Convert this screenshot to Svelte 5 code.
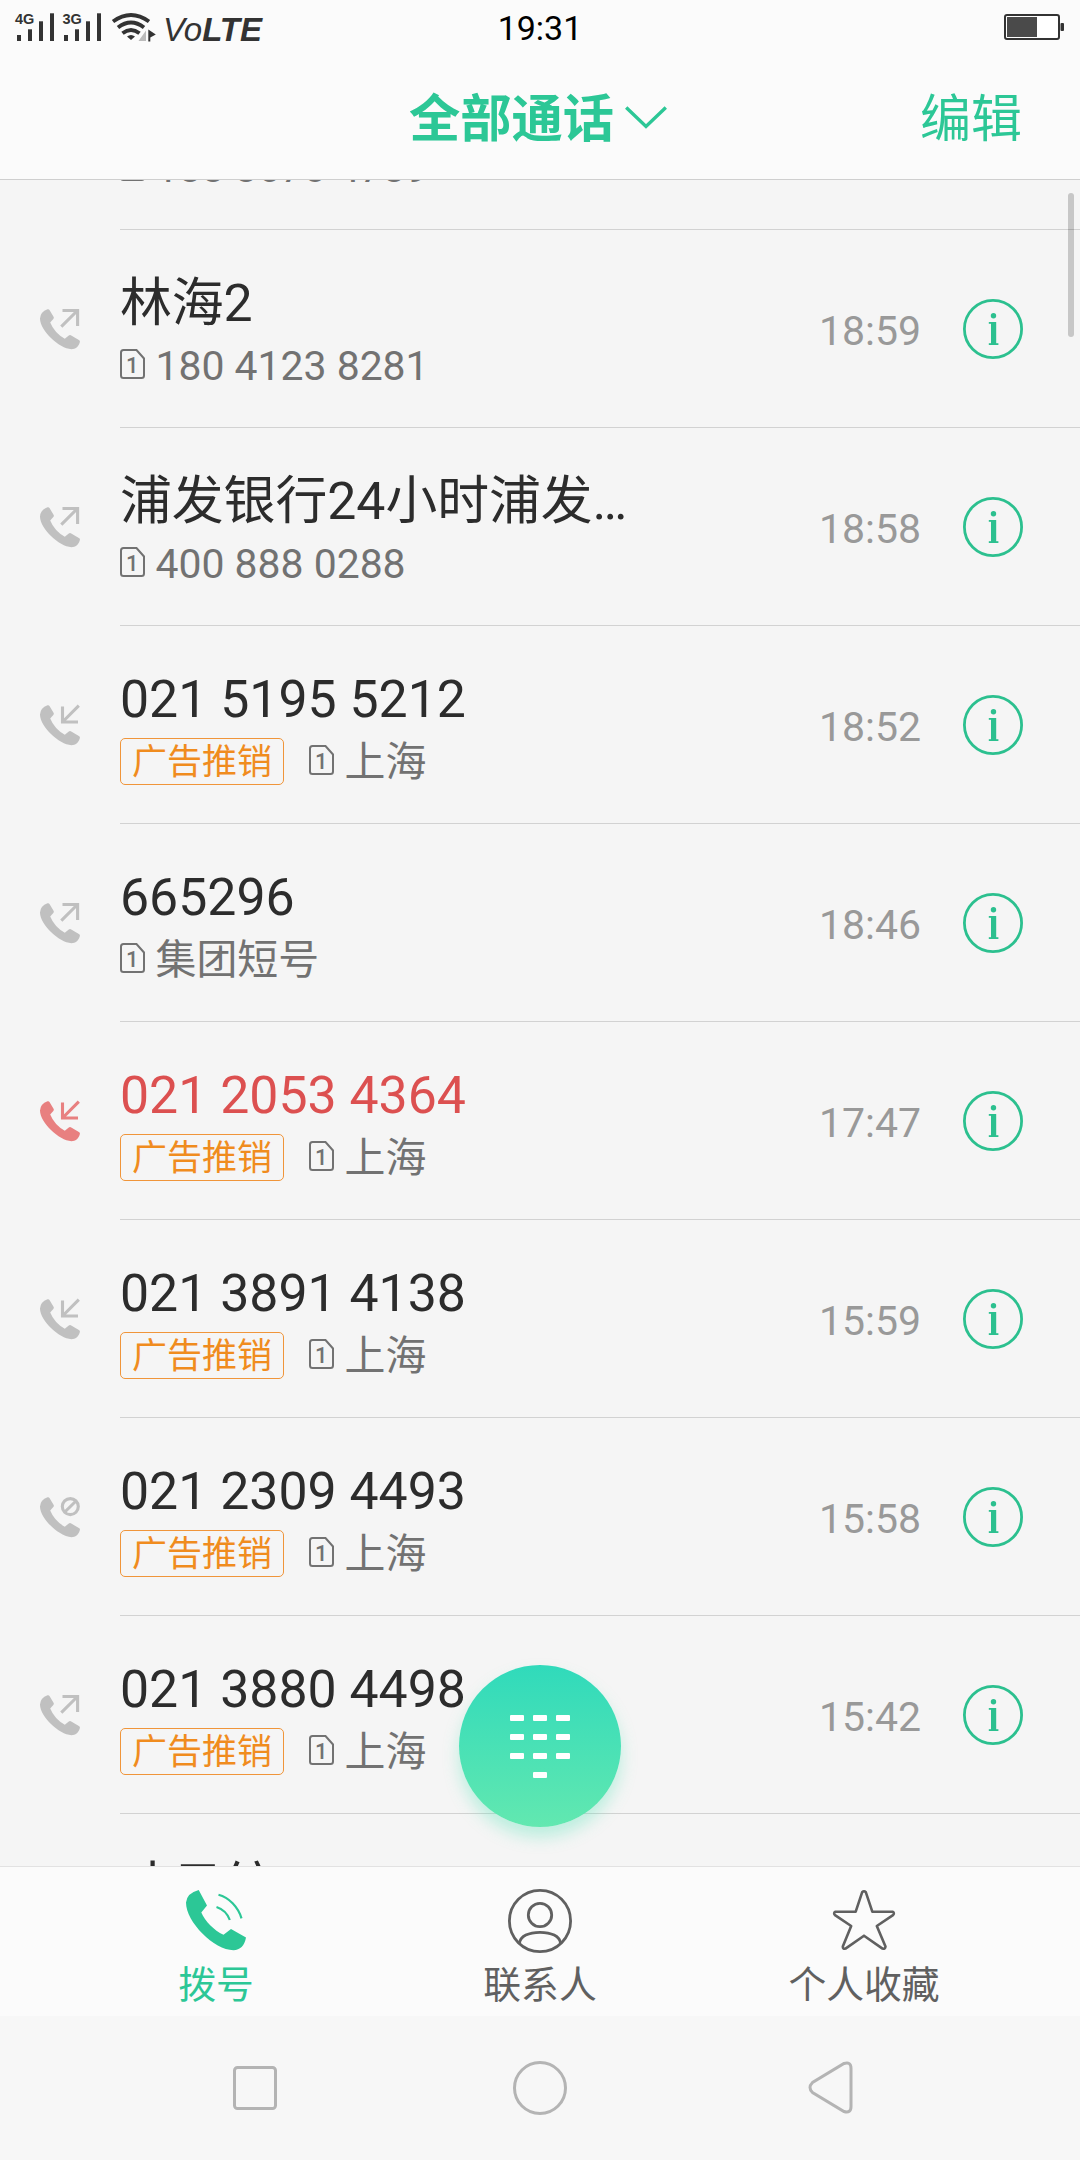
<script>
  let calls = [
    { type: "out", name: "", sub: "188 8670 4789", time: "" },
    { type: "out", name: "林海2", sub: "180 4123 8281", time: "18:59" },
    {
      type: "out",
      name: "浦发银行24小时浦发…",
      sub: "400 888 0288",
      time: "18:58",
    },
    {
      type: "in",
      name: "021 5195 5212",
      tag: "广告推销",
      sub: "上海",
      time: "18:52",
    },
    { type: "out", name: "665296", sub: "集团短号", time: "18:46" },
    {
      type: "in",
      missed: true,
      name: "021 2053 4364",
      tag: "广告推销",
      sub: "上海",
      time: "17:47",
    },
    {
      type: "in",
      name: "021 3891 4138",
      tag: "广告推销",
      sub: "上海",
      time: "15:59",
    },
    {
      type: "blocked",
      name: "021 2309 4493",
      tag: "广告推销",
      sub: "上海",
      time: "15:58",
    },
    {
      type: "out",
      name: "021 3880 4498",
      tag: "广告推销",
      sub: "上海",
      time: "15:42",
    },
    { type: "out", name: "才日统", sub: "", time: "" },
  ];

  let tabs = [
    { id: "dial", label: "拨号" },
    { id: "contacts", label: "联系人" },
    { id: "favorites", label: "个人收藏" },
  ];

  let activeTab = "dial";

  const keys = Array.from({ length: 10 });
</script>

<div class="phone">
  <div class="status-bar">
    <svg class="signals" width="270" height="54" viewBox="0 0 270 54">
      <g fill="#333">
        <text class="net" x="15" y="24">4G</text>
        <rect x="17" y="35" width="4" height="6" />
        <rect x="28" y="29.3" width="4" height="11.7" />
        <rect x="39" y="21.3" width="4" height="19.7" />
        <rect x="50" y="13.3" width="4" height="27.7" />
        <text class="net" x="62.5" y="24">3G</text>
        <rect x="64" y="35" width="4" height="6" />
        <rect x="75" y="29.3" width="4" height="11.7" />
        <rect x="86" y="21.3" width="4" height="19.7" />
        <rect x="97" y="13.3" width="4" height="27.7" />
        <path d="M127 36.5q4-3 8 0l-4 3.5z" />
        <path d="M148.3 29.500v12h2v-4l5.500-3z" />
      </g>
      <path d="M146 30.5v10.5h-7.5z" fill="#bbb" />
      <g fill="none" stroke="#333" stroke-width="3.900">
        <path d="M113 21.5q18-13 36 0" />
        <path d="M118 27.5q13-10 26 0" />
        <path d="M122.5 33.3q8.500-6.500 17 0" />
      </g>
      <text class="volte" x="163" y="41" fill="#333">Vo<tspan font-weight="700">LTE</tspan></text>
    </svg>
    <span class="clock">19:31</span>
    <svg class="battery" width="62" height="28" viewBox="0 0 62 28">
      <rect x="1" y="2" width="54" height="24" rx="2" fill="#fff" stroke="#333" stroke-width="2" />
      <rect x="3" y="4" width="30" height="20" fill="#4a4a4a" />
      <rect x="56.500" y="10" width="3.500" height="8" rx="1" fill="#333" />
    </svg>
  </div>

  <header class="header">
    <button class="filter">
      全部通话
      <svg width="42" height="24" viewBox="0 0 42 24">
        <path d="M1.200 1.500 21 20.500 40.800 1.500" fill="none" stroke="currentColor" stroke-width="3.400" />
      </svg>
    </button>
    <button class="edit">编辑</button>
  </header>

  <main class="list">
    <div class="scroll">
      {#each calls as call}
        <div class="row" class:missed={call.missed}>
          <svg class="call-icon" width="42" height="42" viewBox="0 0 42 42">
            <path
              fill="currentColor"
              d="M7.500.3Q8.800-.2 9.500 1L13.700 8Q14.200 9 13.300 10L10.200 13.500Q14.500 24 24.800 29.700L28.800 26.400Q29.800 25.800 30.800 26.300L39.300 31.200Q40.300 32 39.800 33.300C38.500 38 35.500 40.200 31.500 40.200C19 39.500 0 21.500 0 9.500Q.3 3 7.500.3Z"
            />
            <g fill="none" stroke="currentColor" stroke-width="3.100">
              {#if call.type === "out"}
                <path d="M22.500 1.500H37.600V17M21.300 17.600 37 2" />
              {:else if call.type === "in"}
                <path d="M22.500 1.500V17H38M23 16.500 38.800.7" />
              {:else}
                <circle cx="30.300" cy="9.600" r="8" />
                <path d="M24.800 15 36 4" />
              {/if}
            </g>
          </svg>
          <div class="body">
            <div class="info">
              <div class="name">{call.name}</div>
              <div class="sub">
                {#if call.tag}
                  <span class="tag">{call.tag}</span>
                {/if}
                {#if call.sub}
                  <svg class="sim" width="25" height="30" viewBox="0 0 25 30">
                    <path
                      fill="none"
                      stroke="currentColor"
                      stroke-width="2"
                      d="M3.500 1H16.500L24 9.500V26.500Q24 29 21.500 29H3.500Q1 29 1 26.500V3.500Q1 1 3.500 1Z"
                    />
                    <text x="6" y="24">1</text>
                  </svg>
                  <span>{call.sub}</span>
                {/if}
              </div>
            </div>
            <span class="time">{call.time}</span>
            <button class="detail" aria-label="详情">
              <svg width="60" height="60" viewBox="0 0 60 60">
                <circle cx="30" cy="30" r="28.600" fill="none" stroke="currentColor" stroke-width="2.800" />
                <circle cx="30.500" cy="16.700" r="2.700" fill="currentColor" />
                <rect x="28" y="23" width="5.200" height="22.800" fill="currentColor" />
                <rect x="25.800" y="23" width="5" height="1.800" fill="currentColor" />
                <rect x="25.800" y="44.200" width="9.600" height="1.800" fill="currentColor" />
              </svg>
            </button>
          </div>
        </div>
      {/each}
    </div>
    <div class="scrollbar"></div>
    <button class="fab" aria-label="拨号键盘">
      <span class="keys">
        {#each keys as _}
          <i></i>
        {/each}
      </span>
    </button>
  </main>

  <nav class="tabs">
    {#each tabs as tab}
      <button
        class="tab"
        class:active={tab.id === activeTab}
        on:click={() => (activeTab = tab.id)}
      >
        <svg width="64" height="64" viewBox="0 0 64 64">
          {#if tab.id === "dial"}
            <g transform="translate(2 1)">
              <path
                fill="currentColor"
                d="M12.700 0 21 15.500 15.300 22.500C19 31 28 40.500 37.500 44.800L45 39 60 47.500C58.500 56 54 60 47.500 60.200C28 60 0 32 0 12.500Q1 3 12.700 0Z"
              />
              <g fill="none" stroke="currentColor" stroke-width="2.200">
                <path d="M32.500 4.800C43 7.500 52 17 55.500 28.300" />
                <path d="M30.500 17C36.500 19 41.500 23.500 43.800 30" />
              </g>
            </g>
          {:else if tab.id === "contacts"}
            <g fill="none" stroke="currentColor" stroke-width="2.800">
              <circle cx="32" cy="32" r="30.600" />
              <circle cx="32" cy="26" r="11.700" />
              <path d="M11.500 54.500C12 47 21 43.300 32 43.300S52 47 52.500 54.500" />
            </g>
          {:else}
            <path
              fill="none"
              stroke="currentColor"
              stroke-width="2.600"
              stroke-linejoin="round"
              d="M30.200 3.200Q32 1.200 33.800 3.200L40.300 22.700H60.500Q63 24 61 26.200L44.800 37 53.500 57.500Q53.300 60.300 50.500 59.600L32 46.700 13.500 59.600Q10.700 60.300 10.800 57.500L19.200 37 3 26.200Q1 24 3.500 22.700H23.700Z"
            />
          {/if}
        </svg>
        <span>{tab.label}</span>
      </button>
    {/each}
  </nav>

  <div class="system-nav">
    <svg width="54" height="54" viewBox="0 0 54 54">
      <rect x="6.500" y="6.500" width="41" height="41" rx="3" />
    </svg>
    <svg width="54" height="54" viewBox="0 0 54 54">
      <circle cx="27" cy="27" r="25.500" />
    </svg>
    <svg width="54" height="54" viewBox="0 0 54 54">
      <path d="M46 2.500Q53 .3 53 7.500V45.500Q53 52.500 46 50.500L14.500 31.500Q9.500 26.700 14.500 21.500Z" />
    </svg>
  </div>
</div>

<style>
  :global(body) {
    margin: 0;
  }

  .phone {
    width: 1080px;
    height: 2160px;
    display: flex;
    flex-direction: column;
    overflow: hidden;
    background-color: #fbfbfb;
    font-family: Roboto, "Noto Sans CJK SC", sans-serif;
  }

  button {
    padding: 0;
    border: none;
    background: none;
    color: inherit;
    font: inherit;
    cursor: pointer;
  }

  svg {
    display: block;
    flex: none;
    overflow: visible;
  }

  .status-bar {
    height: 54px;
    display: grid;
    grid-template-columns: 1fr auto 1fr;
    align-items: center;
  }

  .net {
    font: 700 14.5px "Liberation Sans", sans-serif;
  }

  .volte {
    font: italic 33px "Liberation Sans", sans-serif;
  }

  .clock {
    font-size: 34px;
    line-height: 40px;
    margin-top: 2px;
    color: #000;
  }

  .battery {
    justify-self: end;
    margin-right: 14px;
  }

  .header {
    height: 125px;
    display: grid;
    grid-template-columns: 1fr auto 1fr;
    align-items: center;
    border-bottom: 1px solid #cfcfcf;
    color: #2cc796;
  }

  .filter {
    grid-column: 2;
    display: flex;
    align-items: center;
    gap: 11px;
    margin: 6px 4px 0 0;
    font-size: 51.3px;
    font-weight: 700;
    line-height: 66px;
  }

  .filter svg {
    margin-top: -4px;
  }

  .edit {
    justify-self: end;
    margin: 6px 58px 0 0;
    font-size: 51px;
    line-height: 60px;
  }

  .list {
    position: relative;
    flex: 1;
    min-height: 0;
    overflow: hidden;
    background-color: #f5f5f5;
  }

  .scroll {
    margin-top: -148px;
  }

  .row {
    height: 198px;
    display: flex;
    padding-left: 40px;
    color: #c0c0c0;
  }

  .row.missed {
    color: #e88080;
  }

  .call-icon {
    margin: 79px 38px 0 0;
  }

  .body {
    flex: 1;
    display: flex;
    align-items: center;
    box-sizing: border-box;
    border-bottom: 1px solid #d2d2d2;
    padding-right: 57px;
  }

  .info {
    flex: 1;
    padding-top: 6px;
  }

  .name {
    height: 60px;
    color: #2c2c2c;
    font-size: 51.8px;
    line-height: 60px;
    white-space: nowrap;
  }

  .missed .name {
    color: #dc5050;
  }

  .sub {
    display: flex;
    align-items: center;
    height: 47px;
    margin-top: 8px;
    color: #727272;
    font-size: 40.9px;
    line-height: 48px;
  }

  .tag {
    box-sizing: border-box;
    width: 164px;
    height: 47px;
    margin-right: 25px;
    border: 1px solid #f0953a;
    border-radius: 5px;
    color: #f08c1e;
    font-size: 35px;
    line-height: 47px;
    text-align: center;
  }

  .sim {
    margin: -3px 10.5px 0 0;
  }

  .sim text {
    font-size: 22px;
    font-weight: 500;
    fill: currentColor;
  }

  .time {
    margin: 6px 42px 0 0;
    color: #999;
    font-size: 41px;
    line-height: 47px;
  }

  .detail {
    color: #2cc08f;
  }

  .scrollbar {
    position: absolute;
    top: 13px;
    right: 6px;
    width: 6px;
    height: 144px;
    border-radius: 3px;
    background-color: rgba(0, 0, 0, 0.19);
  }

  .fab {
    position: absolute;
    left: 459px;
    bottom: 39px;
    width: 162px;
    height: 162px;
    border-radius: 50%;
    background: linear-gradient(#30dabb, #62e8b0);
    box-shadow: 0 10px 16px rgba(80, 225, 180, 0.35);
    display: flex;
    align-items: center;
    justify-content: center;
  }

  .keys {
    display: grid;
    grid-template-columns: repeat(3, 14px);
    gap: 13px 9px;
  }

  .keys i {
    height: 6px;
    border-radius: 1px;
    background-color: #fff;
  }

  .keys i:last-child {
    grid-column: 2;
  }

  .tabs {
    height: 150px;
    box-sizing: border-box;
    display: grid;
    grid-template-columns: repeat(3, 1fr);
    padding: 0 54px;
    border-top: 1px solid #e2e2e2;
    color: #606060;
  }

  .tab {
    display: flex;
    flex-direction: column;
    align-items: center;
    padding-top: 22px;
    font-size: 37.8px;
    line-height: 44px;
  }

  .tab span {
    margin-top: 10px;
  }

  .tab.active {
    color: #2cc796;
  }

  .system-nav {
    height: 144px;
    box-sizing: border-box;
    display: grid;
    grid-template-columns: repeat(3, 1fr);
    place-items: center;
    padding: 0 112.5px;
    background-color: #f7f7f7;
  }

  .system-nav svg {
    fill: none;
    stroke: #b4b4b4;
    stroke-width: 3;
  }
</style>
